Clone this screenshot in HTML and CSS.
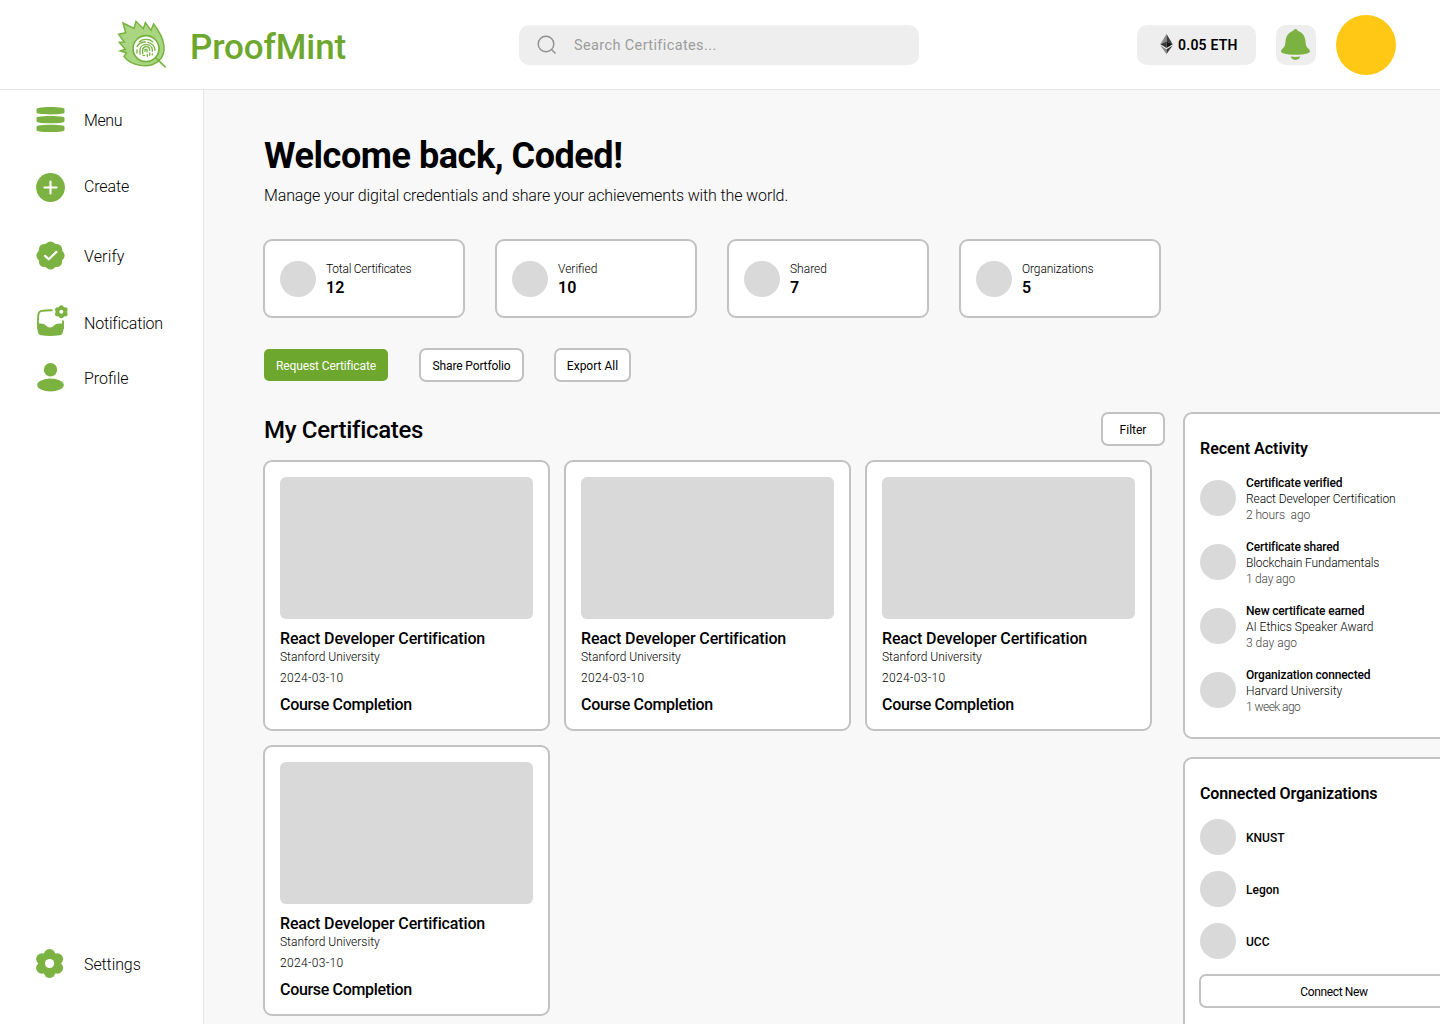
FILE: index.html
```html
<!DOCTYPE html>
<html lang="en">
<head>
<meta charset="utf-8">
<title>ProofMint</title>
<link rel="stylesheet" href="styles.css">
</head>
<body>
<header class="topbar">
  <div class="brand">
    <svg class="logo" viewBox="51 24 150 150">
      <path d="M178 151C200 128 198 90 161 42L153 61L136 38L130 56L108 34L102 55L69 39L77 68L56 73L73 96L58 97L76 118L61 123L79 128L72 140C92 166 146 180 178 151Z" fill="#aad681" stroke="#77b23f" stroke-width="4.5" stroke-linejoin="miter"/>
      <path d="M166 142L197 172" stroke="#77b23f" stroke-width="5"/>
      <circle cx="138" cy="116" r="39" fill="#fff" stroke="#77b23f" stroke-width="5"/>
      <g fill="none" stroke="#77b23f" stroke-width="4" stroke-linecap="round">
        <path d="M118 95C129 86 147 86 158 95M111 110C117 98 129 96 136 96M144 97C157 100 164 108 165 121M111 120V129M120 133V119C121 99 156 99 157 119V124M157 132V134M128 131V119C129 107 148 107 149 118V121M149 129V136M135 124V118H141V126M142 133V139M129 136H134"/>
      </g>
    </svg>
    <span class="brand-name">ProofMint</span>
  </div>
  <div class="search">
    <svg class="search-icon" viewBox="0 0 20 20" fill="none" stroke="#8f8f8f" stroke-width="1.4"><circle cx="9" cy="9" r="7.8"/><path d="M14.8 14.8L18.5 18.5"/></svg>
    <span class="search-text">Search Certificates...</span>
  </div>
  <div class="wallet">
    <svg class="eth" viewBox="0 0 13 21">
      <path d="M6.5 0L0 10.8L6.5 8Z" fill="#8a8a8a"/><path d="M6.5 0L13 10.8L6.5 8Z" fill="#3c3c3b"/>
      <path d="M0 10.8L6.5 8V14.6Z" fill="#393939"/><path d="M13 10.8L6.5 8V14.6Z" fill="#141414"/>
      <path d="M0 12.2L6.5 16V21Z" fill="#8c8c8c"/><path d="M13 12.2L6.5 16V21Z" fill="#3c3c3b"/>
    </svg>
    <span class="wallet-text">0.05 ETH</span>
  </div>
  <div class="bell">
    <svg viewBox="-.5 0 30 32" fill="#7bb241"><path d="M15 0C16.4 0 17.2 1 17.4 2.1C22 3.500 24.500 7 25 12.500C25.400 17 26.200 18.300 28.300 20C30.200 21.700 29.600 23.600 27.400 24.200C20 26.300 10 26.300 2.600 24.200C.4 23.600-.2 21.700 1.700 20C3.800 18.300 4.600 17 5 12.500C5.500 7 8 3.500 12.600 2.100C12.800 1 13.600 0 15 0Z"/><path d="M10.300 27.600Q15 28.300 19.700 27.600C19 32 11 32 10.300 27.600Z"/></svg>
  </div>
  <div class="avatar"></div>
</header>
<div class="shell">
  <nav class="sidebar">
    <a class="nav-item menu"><svg viewBox=".5 -.5 30 30" fill="#7bb241"><path id="bar" d="M1 4.200C1 3 1.600 2.700 3 2.500C10 1.300 20 1.300 27 2.500C28.400 2.700 29 3 29 4.200V6.400C29 7.600 28.400 7.900 27 8.100C20 9.300 10 9.300 3 8.100C1.600 7.900 1 7.600 1 6.400Z"/><use href="#bar" y="8.800"/><use href="#bar" y="17.600"/></svg><span>Menu</span></a>
    <a class="nav-item create"><svg viewBox="0 0 30 30"><circle cx="14.500" cy="15.500" r="14.400" fill="#7bb241"/><path d="M14.500 9.500V21.500M8.500 15.500H20.500" stroke="#fff" stroke-width="2.200" stroke-linecap="round"/></svg><span>Create</span></a>
    <a class="nav-item verify"><svg viewBox="0 0 30 30"><g fill="#7bb241"><circle cx="14.500" cy="13.500" r="12.700"/><circle cx="14.500" cy="4.700" r="5.300"/><circle cx="14.500" cy="22.300" r="5.300"/><circle cx="5.700" cy="13.500" r="5.300"/><circle cx="23.300" cy="13.500" r="5.300"/><circle cx="8.200" cy="7.200" r="5.300"/><circle cx="20.800" cy="7.200" r="5.300"/><circle cx="8.200" cy="19.800" r="5.300"/><circle cx="20.800" cy="19.800" r="5.300"/></g><path d="M9 13.900L12.700 17.300L20.400 9.900" fill="none" stroke="#fff" stroke-width="2.200" stroke-linecap="round" stroke-linejoin="round"/></svg><span>Verify</span></a>
    <a class="nav-item notify"><svg viewBox="0 0 30 30"><path d="M16.500 1.200C10 1.100 6.500 1.700 4.800 2.100C3.300 2.500 2.700 3.600 2.400 5.200C1.700 10 1.800 16 2.200 20M27 11.500V20" fill="none" stroke="#7bb241" stroke-width="1.900"/><path d="M1.200 14.500C4 14.500 7 14.300 9 15.800C10.800 17.200 12 18.500 14 18.500C16 18.500 17.200 17.200 19 15.800C21 14.300 24 14.500 27.900 14.500C27.900 18 27.600 21 26.800 23.500C26.300 25.300 25.500 26 23.500 26.300C17.500 27.200 11 27.200 5.200 26.300C3.200 26 2.500 25.200 2 23.300C1.300 20.500 1.200 18 1.200 14.500Z" fill="#7bb241"/><g fill="#7bb241"><circle cx="25.300" cy="2.800" r="5.200"/><circle cx="25.300" cy="-1.200" r="2.500"/><circle cx="25.300" cy="6.800" r="2.500"/><circle cx="21.500" cy=".8" r="2.500"/><circle cx="21.500" cy="4.900" r="2.500"/><circle cx="29.100" cy=".8" r="2.500"/><circle cx="29.100" cy="4.900" r="2.500"/></g><circle cx="25.300" cy="2.800" r="2" fill="#fff"/></svg><span>Notification</span></a>
    <a class="nav-item profile"><svg viewBox="0 0 30 30" fill="#7bb241"><circle cx="14.500" cy="5.800" r="6.700"/><ellipse cx="14.500" cy="21" rx="13.300" ry="6.500"/></svg><span>Profile</span></a>
    <a class="nav-item settings"><svg viewBox="0 0 30 30"><g fill="#7bb241"><circle cx="13.600" cy="13.500" r="11.400"/><circle cx="13.600" cy="4.900" r="5.800"/><circle cx="13.600" cy="22.100" r="5.800"/><circle cx="5.900" cy="9" r="5.800"/><circle cx="5.900" cy="18" r="5.800"/><circle cx="21.300" cy="9" r="5.800"/><circle cx="21.300" cy="18" r="5.800"/></g><circle cx="13.600" cy="13.500" r="4.600" fill="#fff"/></svg><span>Settings</span></a>
  </nav>
  <main class="content">
    <h1 class="welcome">Welcome back, Coded!</h1>
    <p class="lead">Manage your digital credentials and share your achievements with the world.</p>
    <section class="stats">
      <div class="stat"><i class="dot"></i><div><p class="stat-label tight">Total Certificates</p><p class="stat-value">12</p></div></div>
      <div class="stat"><i class="dot"></i><div><p class="stat-label">Verified</p><p class="stat-value">10</p></div></div>
      <div class="stat"><i class="dot"></i><div><p class="stat-label">Shared</p><p class="stat-value">7</p></div></div>
      <div class="stat"><i class="dot"></i><div><p class="stat-label snug">Organizations</p><p class="stat-value">5</p></div></div>
    </section>
    <div class="actions">
      <button class="btn primary">Request Certificate</button>
      <button class="btn share">Share Portfolio</button>
      <button class="btn export">Export All</button>
    </div>
    <div class="columns">
      <section class="certs">
        <div class="certs-head"><h2>My Certificates</h2><button class="btn filter">Filter</button></div>
        <div class="grid">
          <article class="card"><div class="thumb"></div><h3>React Developer Certification</h3><p class="uni">Stanford University</p><p class="date">2024-03-10</p><p class="kind">Course Completion</p></article>
          <article class="card"><div class="thumb"></div><h3>React Developer Certification</h3><p class="uni">Stanford University</p><p class="date">2024-03-10</p><p class="kind">Course Completion</p></article>
          <article class="card"><div class="thumb"></div><h3>React Developer Certification</h3><p class="uni">Stanford University</p><p class="date">2024-03-10</p><p class="kind">Course Completion</p></article>
          <article class="card"><div class="thumb"></div><h3>React Developer Certification</h3><p class="uni">Stanford University</p><p class="date">2024-03-10</p><p class="kind">Course Completion</p></article>
        </div>
      </section>
      <aside class="side">
        <section class="panel activity">
          <h4>Recent Activity</h4>
          <div class="event"><i class="dot"></i><div><p class="what">Certificate verified</p><p class="which snug">React Developer Certification</p><p class="when snug">2 hours&nbsp; ago</p></div></div>
          <div class="event"><i class="dot"></i><div><p class="what">Certificate shared</p><p class="which snug">Blockchain Fundamentals</p><p class="when tight">1 day ago</p></div></div>
          <div class="event"><i class="dot"></i><div><p class="what">New certificate earned</p><p class="which">AI Ethics Speaker Award</p><p class="when">3 day ago</p></div></div>
          <div class="event"><i class="dot"></i><div><p class="what">Organization connected</p><p class="which">Harvard University</p><p class="when tighter">1 week ago</p></div></div>
        </section>
        <section class="panel orgs">
          <h4 class="t-orgs">Connected Organizations</h4>
          <div class="org"><i class="dot"></i><p>KNUST</p></div>
          <div class="org"><i class="dot"></i><p>Legon</p></div>
          <div class="org"><i class="dot"></i><p>UCC</p></div>
          <button class="btn connect">Connect New</button>
        </section>
      </aside>
    </div>
  </main>
</div>
</body>
</html>
```
FILE: styles.css
```css
* { box-sizing: border-box; margin: 0; padding: 0; }
body { width: 1440px; height: 1024px; overflow: hidden; background: #fff; color: #000; font-family: Roboto, sans-serif; font-size: 12px; white-space: nowrap; }
svg { display: block; overflow: visible; flex: none; }

.topbar { display: flex; align-items: center; height: 90px; border-bottom: 1px solid #e6e6e6; padding-left: 117px; }
.brand { display: flex; align-items: center; width: 402px; }
.logo { width: 50px; height: 50px; margin-top: -3px; }
.brand-name { margin-left: 23px; font-size: 35px; line-height: 42px; font-weight: 500; letter-spacing: -.1px; color: #6ea72e; padding-top: 6px; }
.search { display: flex; align-items: center; width: 400px; height: 40px; border-radius: 10px; background: #eee; padding-left: 18px; }
.search-icon { width: 20px; height: 20px; }
.search-text { margin-left: 17px; padding-top: 2px; font-size: 14.5px; letter-spacing: .38px; color: #9c9c9c; }
.wallet { display: flex; align-items: center; margin-left: 218px; width: 119px; height: 40px; border-radius: 10px; background: #eee; padding-left: 23px; }
.eth { width: 13px; height: 20px; margin-top: -1px; }
.wallet-text { margin-left: 5px; font-size: 14px; font-weight: 600; letter-spacing: .2px; }
.bell { width: 40px; height: 40px; margin-left: 20px; border-radius: 10px; background: #eee; padding: 4px 0 0 4px; }
.bell svg { width: 30px; height: 32px; }
.avatar { width: 60px; height: 60px; margin-left: 20px; border-radius: 50%; background: #ffc814; }

.shell { display: flex; height: 934px; }
.sidebar { display: flex; flex-direction: column; width: 204px; border-right: 1px solid #e6e6e6; padding: 15px 0 44px 36px; flex: none; }
.nav-item { display: flex; align-items: center; height: 30px; font-size: 16px; font-weight: 300; }
.nav-item svg { width: 30px; height: 30px; margin-right: 18px; }
.nav-item span { padding-bottom: 2px; }
.menu span { padding-bottom: 0; letter-spacing: -.4px; }
.create { margin-top: 37px; letter-spacing: -.15px; }
.verify { margin-top: 40px; letter-spacing: .15px; }
.notify { margin-top: 37px; letter-spacing: -.2px; }
.profile { margin-top: 25px; }
.settings { margin-top: auto; letter-spacing: -.1px; }

.content { width: 1236px; background: #f8f8f8; padding: 45px 0 0 59px; overflow: hidden; flex: none; }
.welcome { font-size: 36px; line-height: 42px; font-weight: 700; letter-spacing: -.45px; padding-left: 1px; }
.lead { margin: 9px 0 33px 1px; font-size: 16px; line-height: 20px; font-weight: 300; letter-spacing: -.13px; }
.dot { width: 36px; height: 36px; border-radius: 50%; background: #d9d9d9; flex: none; }
.snug { letter-spacing: -.1px; }
.tight { letter-spacing: -.24px; }
.tighter { letter-spacing: -.55px; }
.stats { display: flex; gap: 30px; }
.stat { display: flex; align-items: center; gap: 10px; width: 202px; height: 79px; border: 2px solid #c2c2c2; border-radius: 9px; background: #fff; padding-left: 15px; }
.stat-label { line-height: 16px; font-weight: 300; padding: 1px 0; }
.stat-value { font-size: 16px; line-height: 20px; font-weight: 600; }

.actions { display: flex; align-items: center; margin-top: 30px; height: 34px; }
.btn { height: 34px; padding-top: 2px; border: 2px solid #c2c2c2; border-radius: 7px; background: #fff; font: 400 12px/18px Roboto, sans-serif; color: #000; white-space: nowrap; text-align: center; flex: none; }
.primary { width: 124px; height: 32px; margin-left: 1px; border: 0; border-radius: 5px; background: #6ea72e; color: #fff; letter-spacing: -.12px; }
.share { width: 105px; margin-left: 31px; letter-spacing: -.13px; }
.export { width: 77px; margin-left: 30px; }

.columns { display: flex; gap: 18px; margin-top: 30px; }
.certs { width: 902px; flex: none; }
.certs-head { display: flex; align-items: center; justify-content: space-between; height: 34px; }
h2 { font-size: 24px; line-height: 32px; font-weight: 500; letter-spacing: -.3px; padding: 2px 0 0 1px; }
.filter { width: 64px; }
.grid { display: grid; grid-template-columns: repeat(3, 287px); gap: 14px; margin-top: 14px; }
.card { height: 271px; border: 2px solid #c2c2c2; border-radius: 9px; background: #fff; padding: 15px; }
.thumb { height: 142px; border-radius: 6px; background: #d9d9d9; }
h3, .kind { font-size: 16px; line-height: 20px; font-weight: 500; }
h3 { margin-top: 10px; letter-spacing: -.14px; }
.uni { line-height: 16px; font-weight: 300; }
.date { margin-top: 5px; line-height: 16px; font-weight: 300; letter-spacing: .35px; }
.kind { margin-top: 9px; letter-spacing: -.32px; }

.side { width: 302px; flex: none; }
.panel { border: 2px solid #c2c2c2; border-radius: 9px; background: #fff; padding: 25px 15px 0; }
.activity { height: 327px; }
.orgs { height: 300px; margin-top: 18px; }
h4 { font-size: 16px; line-height: 20px; font-weight: 600; }
.event { display: flex; align-items: center; gap: 10px; margin-top: 16px; line-height: 16px; }
.event .dot { margin-top: -2px; }
.what { font-weight: 500; letter-spacing: -.15px; }
.which { font-weight: 300; }
.when { font-weight: 300; color: #444; }
.org { display: flex; align-items: center; gap: 10px; margin-top: 16px; font-weight: 500; }
.org p { padding-top: 2px; }
.t-orgs { letter-spacing: -.17px; }
.t-orgs + .org { margin-top: 15px; }
.connect { width: 270px; margin: 15px 0 0 -1px; letter-spacing: -.35px; }
```
